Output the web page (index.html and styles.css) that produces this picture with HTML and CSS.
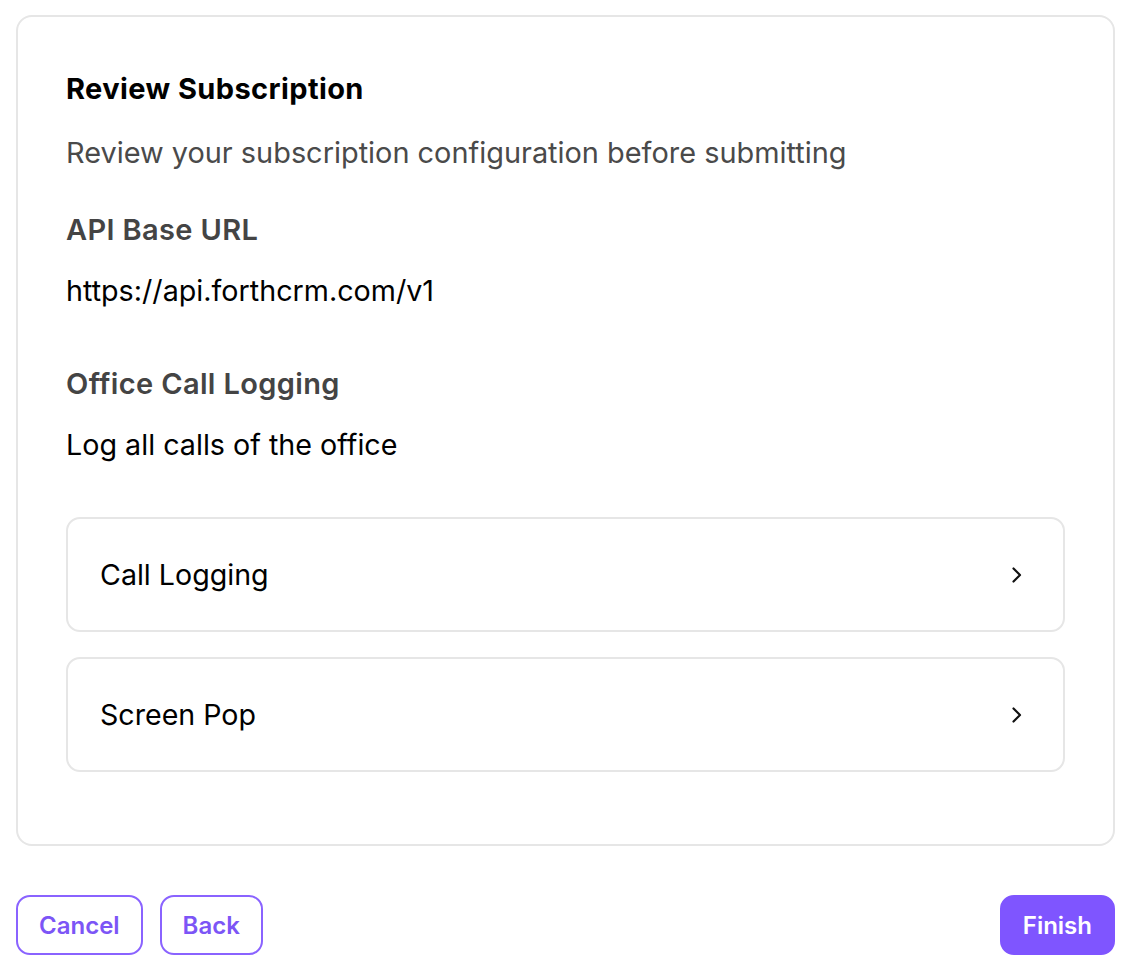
FILE: index.html
```html
<!DOCTYPE html>
<html lang="en">
<head>
<meta charset="utf-8">
<title>Review Subscription</title>
<link rel="stylesheet" href="styles.css">
</head>
<body>
<div class="page">
  <section class="card">
    <h1 class="title">Review Subscription</h1>
    <p class="subtitle">Review your subscription configuration before submitting</p>
    <h2 class="label">API Base URL</h2>
    <p class="value">https://api.forthcrm.com/v1</p>
    <h2 class="label label-spaced">Office Call Logging</h2>
    <p class="value">Log all calls of the office</p>
    <div class="items">
      <div class="item">
        <span class="item-text">Call Logging</span>
        <svg class="chevron" viewBox="0 0 12 18" width="12" height="18"><path d="M2.5 2.5 L9 9 L2.5 15.5" fill="none" stroke="#111" stroke-width="2.2" stroke-linecap="round" stroke-linejoin="round"/></svg>
      </div>
      <div class="item">
        <span class="item-text">Screen Pop</span>
        <svg class="chevron" viewBox="0 0 12 18" width="12" height="18"><path d="M2.5 2.5 L9 9 L2.5 15.5" fill="none" stroke="#111" stroke-width="2.2" stroke-linecap="round" stroke-linejoin="round"/></svg>
      </div>
    </div>
  </section>
  <div class="actions">
    <div class="actions-left">
      <button class="btn btn-outline">Cancel</button>
      <button class="btn btn-outline">Back</button>
    </div>
    <button class="btn btn-primary">Finish</button>
  </div>
</div>
</body>
</html>
```

FILE: styles.css
```css
* { box-sizing: border-box; }
html, body { margin: 0; padding: 0; background: #fff; }
body {
  font-family: Inter, "Noto Sans", "Liberation Sans", sans-serif;
  color: #000;
}
.page {
  padding: 15px 21px 0 16px;
}
.card {
  border: 2px solid #e6e6e6;
  border-radius: 16px;
  padding: 55px 48px 72px 48px;
}
.title {
  margin: 0;
  font-size: 29px;
  line-height: 34px;
  font-weight: 700;
  letter-spacing: 0.4px;
  color: #000;
}
.subtitle {
  margin: 30px 0 0;
  font-size: 28.9px;
  line-height: 34px;
  font-weight: 400;
  color: #4a4a4a;
}
.label {
  margin: 43px 0 0;
  font-size: 29px;
  line-height: 34px;
  font-weight: 600;
  letter-spacing: 0.35px;
  color: #444;
}
.label-spaced { margin-top: 59px; }
.value {
  margin: 27px 0 0;
  font-size: 28.7px;
  line-height: 34px;
  font-weight: 400;
  color: #000;
}
.items {
  margin-top: 55px;
  display: flex;
  flex-direction: column;
  gap: 25px;
}
.item {
  height: 115px;
  border: 2px solid #e6e6e6;
  border-radius: 14px;
  display: flex;
  align-items: center;
  justify-content: space-between;
  padding: 0 40px 0 32px;
}
.item-text {
  font-size: 28.6px;
  line-height: 34px;
  color: #000;
}
.chevron { display: block; }
.actions {
  margin-top: 49px;
  display: flex;
  justify-content: space-between;
  align-items: center;
}
.actions-left {
  display: flex;
  gap: 17px;
}
.btn {
  font-family: inherit;
  height: 60px;
  border-radius: 14px;
  font-size: 24px;
  font-weight: 600;
  padding: 0 21px;
  cursor: pointer;
}
.btn-outline {
  background: #fff;
  border: 2px solid #8a63ff;
  color: #7c55f6;
}
.btn-primary {
  background: #7f55ff;
  border: 2px solid #7f55ff;
  color: #fff;
}
```
